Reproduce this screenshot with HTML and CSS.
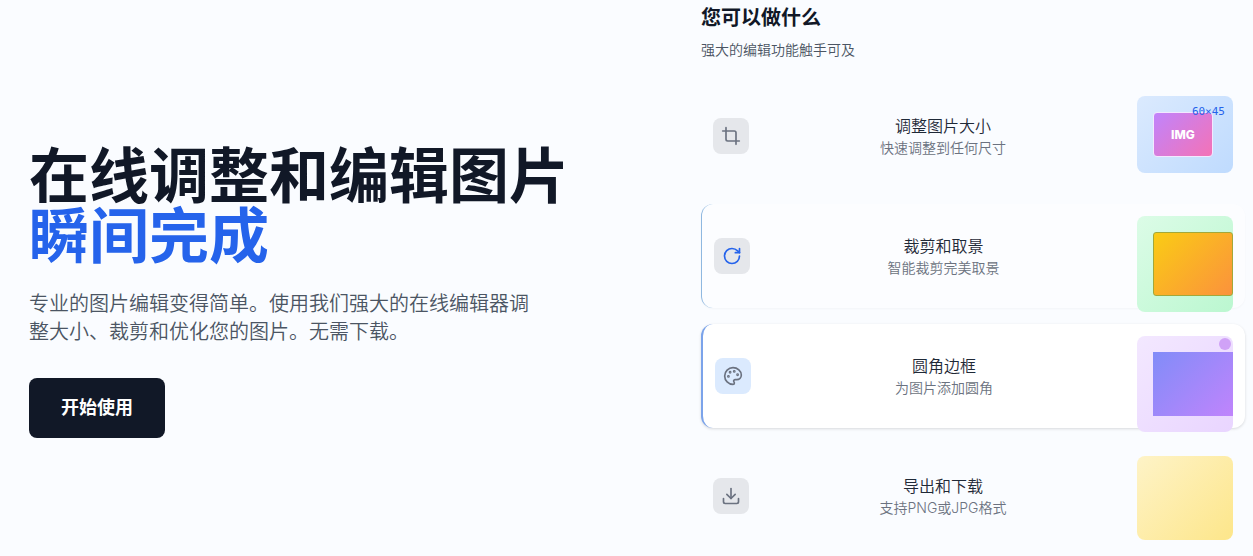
FILE: index.html
```html
<!DOCTYPE html>
<html lang="zh-CN">
<head>
    <meta charset="UTF-8">
    <meta name="viewport" content="width=device-width, initial-scale=1.0">
    <title>在线调整和编辑图片</title>
    <link rel="stylesheet" href="styles.css">
</head>
<body>

    <main class="hero">
        <!-- Intro -->
        <section class="intro">
            <h1>在线调整和编辑图片<span class="accent">瞬间完成</span></h1>
            <p class="lead">专业的图片编辑变得简单。使用我们强大的在线编辑器调整大小、裁剪和优化您的图片。无需下载。</p>
            <button type="button" class="start-button">开始使用</button>
        </section>

        <!-- Features -->
        <section class="features">
            <h2>您可以做什么</h2>
            <p class="subtitle">强大的编辑功能触手可及</p>

            <div class="feature-list">
                <button type="button" class="feature">
                    <span class="icon">
                        <svg viewBox="0 0 24 24"><path d="M6 2v14a2 2 0 0 0 2 2h14"/><path d="M18 22V8a2 2 0 0 0-2-2H2"/></svg>
                    </span>
                    <span class="text">
                        <span class="title">调整图片大小</span>
                        <span class="description">快速调整到任何尺寸</span>
                    </span>
                    <span class="preview preview-resize">
                        <span class="sample">IMG</span>
                        <span class="size-label">60×45</span>
                    </span>
                </button>

                <button type="button" class="feature leaving">
                    <span class="icon">
                        <svg viewBox="0 0 24 24"><path d="M21 12a9 9 0 1 1-9-9c2.52 0 4.93 1 6.74 2.74L21 8"/><path d="M21 3v5h-5"/></svg>
                    </span>
                    <span class="text">
                        <span class="title">裁剪和取景</span>
                        <span class="description">智能裁剪完美取景</span>
                    </span>
                    <span class="preview preview-crop">
                        <span class="sample"></span>
                    </span>
                </button>

                <button type="button" class="feature active">
                    <span class="icon">
                        <svg viewBox="0 0 24 24"><circle cx="13.5" cy="6.5" r=".7"/><circle cx="17.5" cy="10.5" r=".7"/><circle cx="8.5" cy="7.5" r=".7"/><circle cx="6.5" cy="12.5" r=".7"/><path d="M12 2C6.5 2 2 6.5 2 12s4.5 10 10 10c.926 0 1.648-.746 1.648-1.688 0-.437-.18-.835-.437-1.125-.29-.289-.438-.652-.438-1.125a1.64 1.64 0 0 1 1.668-1.668h1.996c3.051 0 5.555-2.503 5.555-5.554C21.965 6.012 17.461 2 12 2z"/></svg>
                    </span>
                    <span class="text">
                        <span class="title">圆角边框</span>
                        <span class="description">为图片添加圆角</span>
                    </span>
                    <span class="preview preview-round">
                        <span class="sample"></span>
                        <span class="dot"></span>
                    </span>
                </button>

                <button type="button" class="feature">
                    <span class="icon">
                        <svg viewBox="0 0 24 24"><path d="M21 15v4a2 2 0 0 1-2 2H5a2 2 0 0 1-2-2v-4"/><path d="M7 10l5 5 5-5"/><path d="M12 15V3"/></svg>
                    </span>
                    <span class="text">
                        <span class="title">导出和下载</span>
                        <span class="description">支持PNG或JPG格式</span>
                    </span>
                    <span class="preview preview-export"></span>
                </button>
            </div>
        </section>
    </main>

</body>
</html>
```

FILE: styles.css
```css
* {
    box-sizing: border-box;
}

body {
    margin: 0;
    background-color: #fafcff;
    color: #111827;
    font-family: Inter, "Noto Sans CJK SC", sans-serif;
    font-weight: 350;
}

h1, h2, p {
    margin: 0;
}

button {
    border: none;
    font-family: inherit;
    cursor: pointer;
}

.hero {
    display: grid;
    grid-template-columns: 1fr 1fr;
    align-items: center;
    gap: 128px;
    padding: 4px 8px 8px 29px;
}

/* Intro */
.intro {
    padding-top: 32px;
}

.intro h1 {
    font-size: 60px;
    font-weight: 700;
    line-height: 60px;
}

.accent {
    display: block;
    color: #2563eb;
}

.lead {
    max-width: 512px;
    margin-top: 24px;
    color: #4b5563;
    font-size: 20px;
    line-height: 28px;
}

.start-button {
    margin-top: 32px;
    padding: 16px 32px;
    border-radius: 8px;
    background-color: #111827;
    color: white;
    font-size: 18px;
    font-weight: 700;
    line-height: 28px;
}

/* Features */
.features h2 {
    font-size: 20px;
    font-weight: 700;
    line-height: 28px;
}

.subtitle {
    margin-top: 8px;
    color: #4b5563;
    font-size: 14px;
    line-height: 20px;
}

.feature-list {
    display: grid;
    gap: 16px;
    margin-top: 24px;
}

.feature {
    display: flex;
    align-items: center;
    width: 100%;
    height: 104px;
    padding: 12px;
    border-radius: 12px;
    background-color: transparent;
    font-weight: 350;
}

.feature.leaving {
    border-left: 1px solid #8fb8e0;
    background-color: #fcfdff;
    box-shadow: 0 1px 2px rgba(0,0,0,0.03);
}

.feature.active {
    border-left: 2px solid #7ba3ea;
    background-color: white;
    box-shadow: 0 1px 3px rgba(0,0,0,0.14);
}

.icon {
    display: flex;
    align-items: center;
    justify-content: center;
    width: 36px;
    height: 36px;
    border-radius: 8px;
    background-color: #e5e7eb;
    color: #6b7280;
}

.leaving .icon {
    color: #2563eb;
}

.active .icon {
    background-color: #dbeafe;
}

.icon svg {
    width: 20px;
    height: 20px;
    fill: none;
    stroke: currentColor;
    stroke-width: 2;
    stroke-linecap: round;
    stroke-linejoin: round;
}

.text {
    flex: 1;
}

.title, .description {
    display: block;
}

.title {
    color: #1f2937;
    font-size: 16px;
    line-height: 24px;
}

.description {
    color: #6b7280;
    font-size: 14px;
    line-height: 20px;
}

/* Previews */
.preview {
    position: relative;
    align-self: flex-start;
    flex-shrink: 0;
    width: 96px;
    height: 96px;
    padding: 16px;
    border-radius: 8px;
    overflow: hidden;
}

.sample {
    display: block;
    width: 80px;
    height: 64px;
}

.preview-resize {
    height: 77px;
    background: linear-gradient(135deg, #dbeafe, #bfdbfe);
}

.preview-resize .sample {
    width: 60px;
    height: 45px;
    border: 1px solid #f3e8ff;
    border-radius: 4px;
    background: linear-gradient(135deg, #c084fc, #f472b6);
    color: white;
    font-size: 12px;
    font-weight: 800;
    line-height: 43px;
}

.size-label {
    position: absolute;
    top: 8px;
    right: 8px;
    color: #2563eb;
    font-family: "DejaVu Sans Mono", monospace;
    font-size: 11px;
    line-height: 16px;
}

.preview-crop {
    background: linear-gradient(135deg, #dcfce7, #bbf7d0);
}

.preview-crop .sample {
    border: 1px solid #a3a839;
    border-radius: 3px;
    background: linear-gradient(135deg, #facc15, #fb923c);
}

.preview-round {
    background: linear-gradient(135deg, #f3e8ff, #e9d5ff);
}

.preview-round .sample {
    background: linear-gradient(135deg, #818cf8, #c084fc);
}

.dot {
    position: absolute;
    top: 2px;
    right: 2px;
    width: 12px;
    height: 12px;
    border-radius: 50%;
    background-color: #d0a2f7;
}

.preview-export {
    height: 84px;
    background: linear-gradient(135deg, #fef3c7, #fde68a);
}
```
